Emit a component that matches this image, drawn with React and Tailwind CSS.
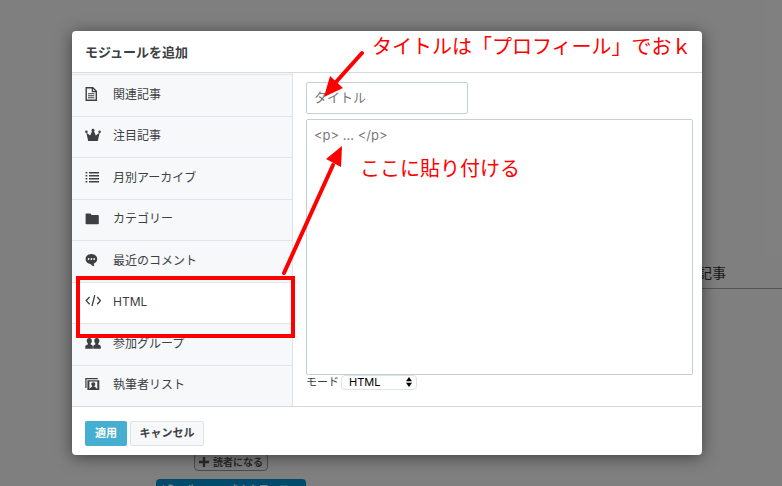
import React, { useState } from "react";
import clsx from "clsx";

const Icon = ({ children }) => (
  <svg viewBox="0 0 16 16" className="mb-0.5 w-4 h-4 shrink-0 text-[#3c4043]" fill="currentColor" aria-hidden="true">
    {children}
  </svg>
);

const DocumentIcon = () => (
  <Icon>
    <path d="M1.200 1.700h6.600l3.500 3.600v8.900H1.200z" fill="none" stroke="currentColor" strokeWidth="1.400" />
    <path d="M7.400 1.700v3.900h3.900" fill="none" stroke="currentColor" strokeWidth="1.300" />
    <path d="M3 7.200h6.300v1.100H3zM3 9.200h6.300v1.100H3zM3 11.200h6.300v1.100H3z" />
  </Icon>
);

const CrownIcon = () => (
  <Icon>
    <path d="M3.200 14 1.300 5.600 5.200 8.600 7.300 3.400h1.400l2.100 5.200 3.900-3L12.800 14z" />
    <circle cx="1.400" cy="4.700" r="1.300" />
    <circle cx="14.600" cy="4.700" r="1.300" />
    <circle cx="8" cy="3.200" r="1.400" />
  </Icon>
);

const ListIcon = () => (
  <Icon>
    <path d="M.6 3h1.700v1.600H.6zM.6 6h1.700v1.600H.6zM.6 9h1.700v1.600H.6zM.6 12h1.700v1.600H.6zM4 3h10v1.500H4zM4 6h10v1.500H4zM4 9h10v1.500H4zM4 12h10v1.500H4z" />
  </Icon>
);

const FolderIcon = () => (
  <Icon>
    <path d="M.6 4.200q0-.8.8-.8h3.700q.6 0 .9.600l.4.900h6.600q.8 0 .8.800v7.800q0 .7-.8.700H1.400q-.8 0-.8-.7z" />
  </Icon>
);

const CommentIcon = () => (
  <Icon>
    <path d="M6.400 2C3 2 .6 4.100.6 7s2.100 4.800 4.900 5c.8 1.100 2.200 2 3.900 2.200-.5-.9-.7-1.800-.5-2.700C11 10.700 12.200 9.100 12.200 7c0-2.900-2.400-5-5.800-5z" />
    <g fill="#f6f8fa">
      <circle cx="3.600" cy="7" r=".9" />
      <circle cx="6.400" cy="7" r=".9" />
      <circle cx="9.200" cy="7" r=".9" />
    </g>
  </Icon>
);

const CodeIcon = () => (
  <Icon>
    <path d="M4.600 4 1.200 7.600l3.400 3.600M12.200 4l3.200 3.600-3.200 3.600M9.800 2.200 7 13" fill="none" stroke="currentColor" strokeWidth="1.300" />
  </Icon>
);

const GroupIcon = () => (
  <Icon>
    <path d="M.3 13.800v-2.500c0-.8 1.300-1.400 2.600-1.800v-1C2.100 7.900 1.700 7 1.700 5.800 1.700 4 2.700 2.900 4.300 2.900S6.900 4 6.900 5.800c0 1.200-.4 2.100-1.200 2.700v1c1.300.4 2.100.9 2.100 1.800v2.500z" />
    <path d="M8.200 13.800v-2.500c0-.8.900-1.400 2.200-1.800v-1C9.600 7.900 9.200 7 9.200 5.800c0-1.800 1-2.900 2.600-2.900S14.400 4 14.400 5.800c0 1.200-.4 2.100-1.200 2.700v1c1.300.4 2.600 1 2.600 1.800v2.500z" />
  </Icon>
);

const AuthorsIcon = () => (
  <Icon>
    <path d="M.9 12V2.700h11.900" fill="none" stroke="currentColor" strokeWidth="1.200" />
    <path d="M2.400 4.200h11.900v9.800H2.400zM4.400 5.500v7.200h.5c.2-1.300 1.300-1.700 2.300-2v-.7c-.6-.4-.9-1-.9-1.900 0-1.200.8-1.900 2-1.900s2 .7 2 1.900c0 .9-.3 1.500-.9 1.900v.7c1 .3 2.100.7 2.300 2h.6V5.500z" fillRule="evenodd" />
  </Icon>
);

const MODULES = [
  { id: "related", label: "関連記事", icon: DocumentIcon },
  { id: "popular", label: "注目記事", icon: CrownIcon },
  { id: "archive", label: "月別アーカイブ", icon: ListIcon },
  { id: "category", label: "カテゴリー", icon: FolderIcon },
  { id: "comments", label: "最近のコメント", icon: CommentIcon },
  { id: "html", label: "HTML", icon: CodeIcon },
  { id: "groups", label: "参加グループ", icon: GroupIcon },
  { id: "authors", label: "執筆者リスト", icon: AuthorsIcon },
];

// Blog page that sits under the dialog
const BlogPage = () => (
  <div className="flex h-full justify-between">
    <div className="flex flex-col items-center pl-[156px] pt-[453px]">
      <button type="button" className="flex h-[18px] shrink-0 items-center gap-1 rounded-sm border border-[#999] bg-[#f8f8f8] px-1 text-[10px] font-bold text-[#555]">
        <svg viewBox="0 0 10 10" className="h-[10px] w-[10px]" fill="currentColor" aria-hidden="true">
          <path d="M3.800 0h2.400v3.800H10v2.400H6.200V10H3.800V6.200H0V3.800h3.800z" />
        </svg>
        読者になる
      </button>
      <a href="#follow" className="mt-2 flex h-5 w-[150px] shrink-0 items-center gap-1 whitespace-nowrap rounded-sm bg-[#0095d9] px-1.5 text-[10px] font-bold text-white">
        <svg viewBox="0 0 24 24" className="h-3 w-3 shrink-0" fill="currentColor" aria-hidden="true">
          <path d="M23.600 4.900c-.8.400-1.700.6-2.700.8 1-.6 1.700-1.500 2-2.600-.9.500-1.900.9-3 1.100a4.700 4.700 0 0 0-8 4.300C8 8.300 4.500 6.400 2.200 3.500a4.700 4.700 0 0 0 1.500 6.300c-.8 0-1.500-.2-2.100-.6 0 2.300 1.600 4.200 3.800 4.700-.7.200-1.400.2-2.100.1.600 1.900 2.300 3.200 4.400 3.300A9.500 9.500 0 0 1 .7 19.200C10.300 25 21.200 18.300 21.200 7.300c1-.7 1.800-1.500 2.400-2.400z" />
        </svg>
        @li_mono さんをフォロー
      </a>
    </div>
    <aside className="w-[84px] pt-[262px]">
      <h2 className="border-b border-[#aaa] pb-1 text-sm leading-[22px] text-[#333]">記事</h2>
    </aside>
  </div>
);

const ModeSelect = ({ value, onChange }) => (
  <div className="flex items-center gap-0.5 text-[11px] leading-[15px] text-[#3c4043]">
    <label htmlFor="mode">モード</label>
    <div className="relative">
      <select
        id="mode"
        value={value}
        onChange={(e) => onChange(e.target.value)}
        className="block h-[15px] w-[76px] appearance-none rounded border border-[#dde3e6] bg-white pl-[7px] font-[Inter] text-[11px] leading-[13px] text-black outline-none"
      >
        <option>HTML</option>
        <option>Markdown</option>
      </select>
      <svg viewBox="0 0 6 10" className="pointer-events-none absolute right-[5px] top-[2px] h-[10px] w-[6px]" aria-hidden="true">
        <path d="M3 0l3 4.200H0zM3 10l3-4.200H0z" />
      </svg>
    </div>
  </div>
);

// Red guide marks on top of the dialog
const Annotations = () => (
  <div className="pointer-events-none absolute inset-0 text-xl leading-6 text-[#ff0000]">
    <div className="absolute left-1 top-[245px] h-[62px] w-[219px] border-4 border-[#ff0000]" />
    <p className="absolute left-[300px] top-1 whitespace-nowrap">タイトルは「プロフィール」でおｋ</p>
    <p className="absolute left-72 top-[126px] whitespace-nowrap">ここに貼り付ける</p>
    <svg viewBox="0 0 630 424" className="absolute left-0 top-0 h-[424px] w-[630px]" fill="#ff0000" stroke="#ff0000" aria-hidden="true">
      <path d="M290 22 264 51M212 242l49-108" strokeWidth="4" strokeLinecap="round" />
      <path d="M252 66l6-21 13 12zM270 115l-16 13 15 8z" stroke="none" />
    </svg>
  </div>
);

export default function App() {
  const [selected, setSelected] = useState("html");
  const [title, setTitle] = useState("");
  const [body, setBody] = useState("");
  const [mode, setMode] = useState("HTML");

  return (
    <div className="relative h-screen overflow-hidden bg-white font-['Inter','Noto_Sans_CJK_JP',sans-serif]">
      <BlogPage />

      <div className="absolute inset-0 bg-black/50 pl-[72px] pr-20 pt-[31px]">
        <div role="dialog" aria-labelledby="dialog-title" className="relative rounded bg-white shadow-[0_2px_16px_rgba(0,0,0,0.5)]">
          <header className="border-b border-[#d3dbe0] px-[13px] pb-2.5 pt-[11px]">
            <h1 id="dialog-title" className="text-[13px] font-bold leading-5 text-[#3c4043]">モジュールを追加</h1>
          </header>

          <div className="flex border-b border-[#d3dbe0]">
            <nav className="flex w-[221px] shrink-0 flex-col border-r border-[#dde3e6] bg-[#f6f8fa] pt-px">
              {MODULES.map(({ id, label, icon: ModuleIcon }) => (
                <button
                  key={id}
                  type="button"
                  onClick={() => setSelected(id)}
                  className={clsx(
                    "flex flex-1 items-center gap-3 border-t border-[#e2e6e9] pb-px pl-[13px] text-left text-xs text-[#3c4043]",
                    selected === id && "bg-white"
                  )}
                >
                  <ModuleIcon />
                  {label}
                </button>
              ))}
            </nav>

            <div className="flex-1 pb-4 pl-[13px] pr-[9px] pt-[9px]">
              <input
                type="text"
                aria-label="タイトル"
                placeholder="タイトル"
                value={title}
                onChange={(e) => setTitle(e.target.value)}
                className="block h-8 w-[162px] rounded-xs border border-[#c5d0d6] px-[7px] pb-0.5 text-[13px] text-[#3c4043] outline-none placeholder:text-[#777]"
              />
              <textarea
                aria-label="HTML"
                placeholder="<p> ... </p>"
                value={body}
                onChange={(e) => setBody(e.target.value)}
                className="mt-[5px] block h-[256px] w-full resize-none rounded-xs border border-[#c5d0d6] px-[7px] py-1.5 text-[13px] leading-[18px] text-[#3c4043] outline-none placeholder:text-[#777]"
              />
              <ModeSelect value={mode} onChange={setMode} />
            </div>
          </div>

          <footer className="flex gap-[3px] px-[13px] pb-[9px] pt-3.5 text-[11px] font-bold">
            <button type="button" className="h-[25px] w-[42px] rounded-xs bg-[#45aed1] text-white">適用</button>
            <button type="button" className="h-[25px] w-[74px] rounded-xs border border-[#dde3e6] bg-[#f6f8fa] text-[#3c4043]">キャンセル</button>
          </footer>

          <Annotations />
        </div>
      </div>
    </div>
  );
}
